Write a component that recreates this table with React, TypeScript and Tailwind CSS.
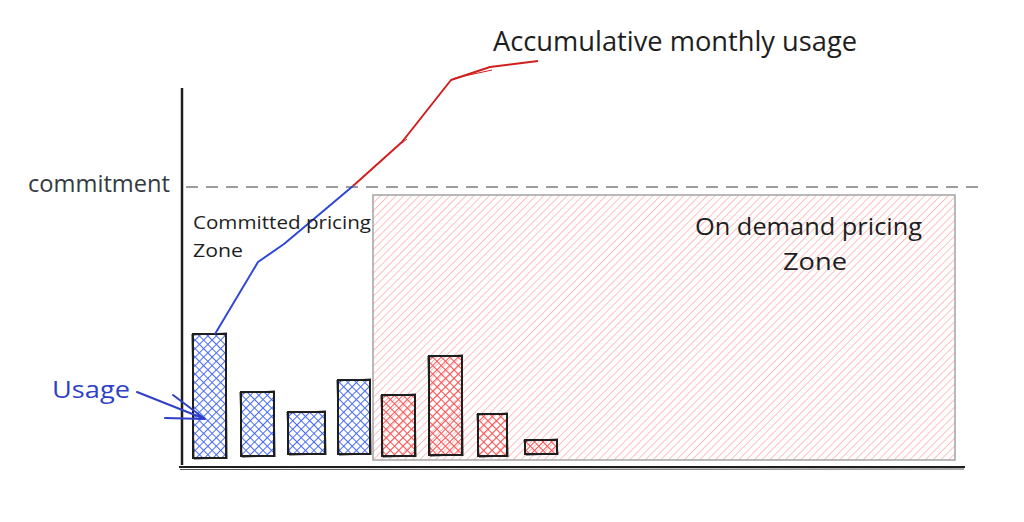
import React from 'react';

type Bar = { x: number; y: number; w: number; h: number; tone: 'blue' | 'red' };

const bars: Bar[] = [
  { x: 193, y: 334, w: 33, h: 124, tone: 'blue' },
  { x: 241, y: 392, w: 33, h: 64, tone: 'blue' },
  { x: 288, y: 412, w: 37, h: 42, tone: 'blue' },
  { x: 338, y: 380, w: 32, h: 74, tone: 'blue' },
  { x: 382, y: 395, w: 33, h: 61, tone: 'red' },
  { x: 429, y: 356, w: 33, h: 99, tone: 'red' },
  { x: 478, y: 414, w: 29, h: 42, tone: 'red' },
  { x: 525, y: 440, w: 32, h: 14, tone: 'red' },
];

const hand = '"Open Sans", "Lato", "Liberation Sans", sans-serif';

function SketchBar({ bar }: { bar: Bar }) {
  const { x, y, w, h, tone } = bar;
  return (
    <g>
      <rect
        x={x}
        y={y}
        width={w}
        height={h}
        fill={tone === 'blue' ? 'url(#crossBlue)' : 'url(#crossRed)'}
      />
      <rect x={x} y={y} width={w} height={h} fill="none" stroke="#1e1e1e" strokeWidth={2} />
      <path
        d={`M${x - 1} ${y + 1} L${x + w + 1} ${y - 1} M${x + w} ${y + 1} L${x + w + 1} ${y + h + 1} M${x + w + 1} ${y + h} L${x + 1} ${y + h + 1} M${x + 1} ${y + h + 1} L${x - 1} ${y}`}
        fill="none"
        stroke="#1e1e1e"
        strokeWidth={1}
      />
    </g>
  );
}

export default function App() {
  return (
    <div className="w-[1024px] h-[522px] bg-white overflow-hidden">
      <svg width="1024" height="522" viewBox="0 0 1024 522" className="block">
        <defs>
          <pattern id="zoneHatch" width="5.5" height="5.5" patternUnits="userSpaceOnUse" patternTransform="rotate(45)">
            <line x1="0" y1="0" x2="0" y2="5.5" stroke="#ff9e9e" strokeWidth="1.3" />
          </pattern>
          <pattern id="crossBlue" width="6" height="6" patternUnits="userSpaceOnUse" patternTransform="rotate(45)">
            <line x1="0" y1="0" x2="0" y2="6" stroke="#4a6cf7" strokeWidth="2" />
            <line x1="0" y1="0" x2="6" y2="0" stroke="#4a6cf7" strokeWidth="2" />
          </pattern>
          <pattern id="crossRed" width="6" height="6" patternUnits="userSpaceOnUse" patternTransform="rotate(45)">
            <line x1="0" y1="0" x2="0" y2="6" stroke="#fa5252" strokeWidth="2" />
            <line x1="0" y1="0" x2="6" y2="0" stroke="#fa5252" strokeWidth="2" />
          </pattern>
        </defs>

        {/* on demand zone */}
        <rect x={373} y={195} width={582} height={265} fill="url(#zoneHatch)" stroke="#a3a3a3" strokeWidth={1.5} />

        {/* commitment line */}
        <line x1={186} y1={187} x2={978} y2={187} stroke="#9c9c9c" strokeWidth={2} strokeDasharray="12 8" />

        {/* axes */}
        <path d="M182 88 L182 465" stroke="#1e1e1e" strokeWidth={2.5} fill="none" />
        <path d="M179 467 L965 467" stroke="#1e1e1e" strokeWidth={2} fill="none" />
        <path d="M180 469.5 L964 469" stroke="#555" strokeWidth={1} fill="none" />

        {bars.map((b, i) => (
          <SketchBar key={i} bar={b} />
        ))}

        {/* accumulative curve */}
        <polyline
          points="215,334 258,262 284,244 315,218 353,186"
          fill="none"
          stroke="#2f47d6"
          strokeWidth={2}
          strokeLinejoin="round"
        />
        <polyline
          points="353,186 402,142 451,80 490,67 538,61"
          fill="none"
          stroke="#d01f1f"
          strokeWidth={2}
          strokeLinejoin="round"
        />
        <path d="M455 78 L492 70 M402 143 L407 139" stroke="#d01f1f" strokeWidth={1} fill="none" />

        {/* usage arrow */}
        <path
          d="M137 392 L205 419 M173 395 L205 419 M165 418 L205 419"
          stroke="#2f3fc8"
          strokeWidth={2}
          strokeLinecap="round"
          fill="none"
        />

        <g style={{ fontFamily: hand }} fontWeight={500}>
          <text x={493} y={51} fontSize={27} fill="#1e1e1e" textLength={364} lengthAdjust="spacingAndGlyphs">
            Accumulative monthly usage
          </text>
          <text x={28} y={192} fontSize={24} fill="#343a40" textLength={142} lengthAdjust="spacingAndGlyphs">
            commitment
          </text>
          <text x={193} y={229} fontSize={19} fill="#1e1e1e" textLength={178} lengthAdjust="spacingAndGlyphs">
            Committed pricing
          </text>
          <text x={193} y={257} fontSize={19} fill="#1e1e1e" textLength={50} lengthAdjust="spacingAndGlyphs">
            Zone
          </text>
          <text x={695} y={235} fontSize={24} fill="#1e1e1e" textLength={227} lengthAdjust="spacingAndGlyphs">
            On demand pricing
          </text>
          <text x={783} y={270} fontSize={24} fill="#1e1e1e" textLength={64} lengthAdjust="spacingAndGlyphs">
            Zone
          </text>
          <text x={52} y={398} fontSize={24} fill="#2f3fc8" textLength={78} lengthAdjust="spacingAndGlyphs">
            Usage
          </text>
        </g>
      </svg>
    </div>
  );
}
